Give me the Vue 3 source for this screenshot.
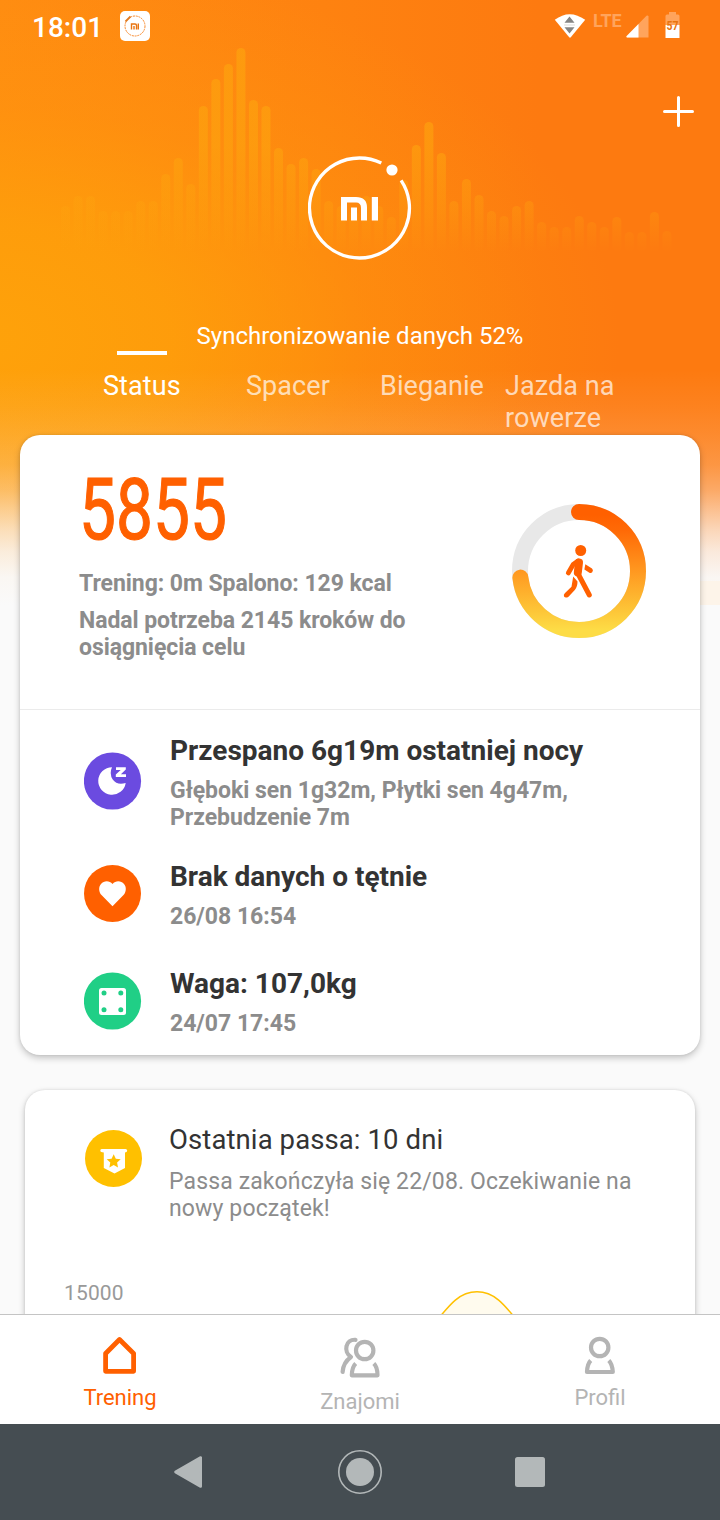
<template>
  <div class="phone">
    <main class="content">
      <div class="hero-bg">
        <svg class="wave" width="720" height="270" viewBox="0 0 720 270">
          <defs>
            <linearGradient id="barFade" gradientUnits="userSpaceOnUse" x1="0" y1="40" x2="0" y2="252">
              <stop offset="0" stop-color="#fda40e" stop-opacity="0.65" />
              <stop offset="0.5" stop-color="#fda40e" stop-opacity="0.6" />
              <stop offset="0.8" stop-color="#fda40e" stop-opacity="0.3" />
              <stop offset="1" stop-color="#fda40e" stop-opacity="0" />
            </linearGradient>
          </defs>
          <rect
            v-for="(top, i) in bars"
            :key="i"
            :x="61 + i * 12.53"
            :y="top"
            width="9"
            :height="252 - top"
            rx="4.5"
            fill="url(#barFade)"
          />
        </svg>
      </div>

      <header class="header">
        <div class="status-bar">
          <span class="clock">18:01</span>
          <svg class="app-badge" width="30" height="30" viewBox="0 0 30 30">
            <rect width="30" height="30" rx="5" fill="#fff" />
            <circle cx="15" cy="15" r="10" fill="none" stroke="#f98a2c" stroke-width="1" stroke-dasharray="2 0.8" />
            <path d="M5.500 10.500l5-5" stroke="#e07a20" stroke-width="1.800" />
            <path d="M11.500 18.500v-5.500h3.600q1.400 0 1.400 1.400V18.500M14 15V18.500M18.300 12.400V18.500" fill="none" stroke="#e87410" stroke-width="1.400" />
          </svg>
          <div class="status-icons">
            <svg class="wifi" width="32" height="26" viewBox="0 0 32 26">
              <path d="M.8 6.8Q15.500-4.500 31.200 6.800L16.800 24.200q-.8.900-1.600 0z" fill="#fff" />
              <path d="M15.500 3.500L20.500 9.700H10.500zM15.500 20.400L20.500 14.300H10.500z" fill="#858585" />
              <path d="M10 12h11" stroke="#ddd" stroke-width="1" />
            </svg>
            <span class="lte">LTE</span>
            <svg class="signal" width="23" height="23" viewBox="0 0 23 23">
              <path d="M22.500 1.500V22.500H1.200q-1.400-.4-.5-1.600L20.500.800q1.500-1 2 .7z" fill="#ffa45c" />
              <path d="M12.500 9V22.500H1.200q-1.400-.4-.5-1.600z" fill="#fff" />
            </svg>
            <svg class="battery" width="15" height="27" viewBox="0 0 15 27">
              <path d="M4 0h7v2.500h2q1.500 0 1.500 1.500V13H.5V4Q.5 2.500 2 2.500h2z" fill="#ffa45c" />
              <path d="M.5 13h14v13H.5z" fill="#fff" />
              <text x="7.600" y="18" text-anchor="middle" textLength="12" lengthAdjust="spacingAndGlyphs">57</text>
            </svg>
          </div>
        </div>

        <div class="toolbar">
          <svg width="32" height="32" viewBox="0 0 32 32">
            <path d="M16.500 1.500V29.500M2.500 15.500H30.500" stroke="#fff" stroke-width="3" stroke-linecap="round" />
          </svg>
        </div>

        <svg class="logo" width="104" height="104" viewBox="0 0 104 104">
          <path d="M73.300 7A50 50 0 1 0 93.100 24.300" fill="none" stroke="#fff" stroke-width="3.300" />
          <circle cx="84" cy="14" r="5.600" fill="#fff" />
          <path d="M33 41H48Q59 41 59 51.500V64.500H53V52Q53 46.500 48 46.500H39V64.500H33z" fill="#fff" />
          <path d="M43 51.500h6v13h-6zM63.800 41H70V64.500H63.800z" fill="#fff" />
        </svg>

        <p class="sync">Synchronizowanie danych 52%</p>

        <nav class="tabs">
          <span
            v-for="tab in tabs"
            :key="tab.name"
            class="tab"
            :class="[tab.cls, { active: tab.active }]"
          >{{ tab.name }}</span>
        </nav>
      </header>

      <section class="card main-card">
        <div class="summary">
          <div class="summary-text">
            <div class="steps"><span>5855</span></div>
            <p class="line first">Trening: 0m Spalono: 129 kcal</p>
            <p class="line">Nadal potrzeba 2145 kroków do osiągnięcia celu</p>
          </div>
          <svg class="ring" width="134" height="134" viewBox="0 0 134 134">
            <defs>
              <!-- runs along x because the stroke it fills is rotated by -90deg -->
              <linearGradient id="ringFill" gradientUnits="userSpaceOnUse" x1="134" y1="0" x2="0" y2="0">
                <stop offset="0.08" stop-color="#ff6000" />
                <stop offset="0.2" stop-color="#ff6a06" />
                <stop offset="0.5" stop-color="#ff9820" />
                <stop offset="0.8" stop-color="#fdc638" />
                <stop offset="0.94" stop-color="#fddc46" />
              </linearGradient>
            </defs>
            <circle cx="67" cy="67" r="59" fill="none" stroke="#e8e8e8" stroke-width="16" />
            <circle
              cx="67"
              cy="67"
              r="59"
              fill="none"
              stroke="url(#ringFill)"
              stroke-width="16"
              stroke-linecap="round"
              pathLength="100"
              :stroke-dasharray="`${progress} 100`"
              class="ring-value"
            />
            <g fill="none" stroke="#ff6000" stroke-linecap="round" stroke-linejoin="round">
              <circle cx="68.700" cy="46.500" r="5.500" fill="#ff6000" stroke="none" />
              <path d="M66 57L61.200 60.500L56.300 69" stroke-width="4.800" />
              <path d="M67 58.500L65.800 68.500" stroke-width="8" />
              <path d="M66.200 70L77.300 91" stroke-width="5" />
              <path d="M61.200 72.500L65.500 77.500Q65.500 83 62.800 86L56.500 92.700Q53.500 94.500 52 92.500Q51.200 90.800 53 89L59.500 82.800z" fill="#ff6000" stroke="none" />
              <path d="M73.300 60.300L80 64.500Q81.800 66.300 80.200 68.300Q79 69.600 77 68.500L72.400 65.500z" fill="#ff6000" stroke="none" />
            </g>
          </svg>
        </div>

        <div class="row">
          <svg class="row-icon" width="58" height="58" viewBox="0 0 58 58">
            <circle cx="28.500" cy="29" r="28.600" fill="#6b4be0" />
            <path d="M28 15.200A13.800 13.800 0 1 0 41.700 31Q33 33.500 28.700 27.500Q25 21.500 28 15.200z" fill="#fff" />
            <path d="M32 15.200H41.800V17.600L36.900 22.300H42V25H31.800V22.600L36.700 17.900H32z" fill="#fff" />
          </svg>
          <div class="row-text">
            <h2>Przespano 6g19m ostatniej nocy</h2>
            <p>Głęboki sen 1g32m, Płytki sen 4g47m, Przebudzenie 7m</p>
          </div>
        </div>

        <div class="row">
          <svg class="row-icon" width="58" height="58" viewBox="0 0 58 58">
            <circle cx="28.500" cy="28.500" r="28.500" fill="#ff6000" />
            <path d="M28.500 41.200L17.500 30C14.700 27 14.300 22 17 18.900C20 15.500 25.500 15.500 28.500 18.900C31.500 15.500 37 15.500 40 18.900C42.700 22 42.300 27 39.500 30z" fill="#fff" />
          </svg>
          <div class="row-text">
            <h2>Brak danych o tętnie</h2>
            <p>26/08 16:54</p>
          </div>
        </div>

        <div class="row last">
          <svg class="row-icon" width="58" height="58" viewBox="0 0 58 58">
            <circle cx="28.500" cy="29" r="28.600" fill="#20cf86" />
            <rect x="15" y="16" width="27" height="27" rx="2.500" fill="#fff" />
            <g fill="#20cf86">
              <circle cx="20" cy="21" r="2.500" />
              <circle cx="36.800" cy="21" r="2.500" />
              <circle cx="20" cy="37.800" r="2.500" />
              <circle cx="36.800" cy="37.800" r="2.500" />
            </g>
          </svg>
          <div class="row-text">
            <h2>Waga: 107,0kg</h2>
            <p>24/07 17:45</p>
          </div>
        </div>
      </section>

      <section class="card streak-card">
        <div class="streak">
          <svg class="streak-icon" width="58" height="58" viewBox="0 0 58 58">
            <circle cx="28.500" cy="29.500" r="28.500" fill="#ffc000" />
            <path d="M16.700 20H40.500Q42.200 20.200 42.200 21.800Q42 23.500 40 23.500V39L29.500 44.500L18.800 39V23.500Q15.500 23.500 15.300 21.800Q15.200 20.200 16.700 20z" fill="#fff" />
            <path d="M28.700 25.300L30.800 29.700L35.700 30.300L32.100 33.600L33 38.500L28.700 36.100L24.400 38.500L25.300 33.600L21.700 30.300L26.600 29.700z" fill="#ffc000" />
          </svg>
          <div class="streak-text">
            <h2>Ostatnia passa: 10 dni</h2>
            <p>Passa zakończyła się 22/08. Oczekiwanie na nowy początek!</p>
          </div>
        </div>
        <div class="chart">
          <span class="axis">15000</span>
          <svg class="curve" width="124" height="60" viewBox="0 0 124 60">
            <path d="M0 60L10 44C30 21 40 .8 62 .8S94 21 114 44L124 60z" fill="#fffbee" stroke="#ffc000" stroke-width="1.500" />
          </svg>
        </div>
      </section>
    </main>

    <nav class="bottom-nav">
      <div class="nav-item selected">
        <svg width="44" height="44" viewBox="0 0 44 44">
          <path d="M21.500 5.500L35.600 19.500V37.300H7.600V19.500z" fill="none" stroke="#ff6000" stroke-width="4.800" stroke-linejoin="round" />
        </svg>
        <span>Trening</span>
      </div>
      <div class="nav-item friends">
        <svg width="44" height="48" viewBox="0 0 44 48">
          <g fill="none" stroke="#b4b4b4" stroke-width="4.200">
            <circle cx="26.700" cy="16.500" r="8.700" />
            <path d="M17.700 29.500Q14 33 13.800 41.300H39.500Q39.500 33 35.800 29.500" stroke-linejoin="round" />
            <path d="M17.500 5.800C7.500 5 5 18 13 23C8 26.500 5 31.500 4.600 38" stroke-linecap="round" stroke-linejoin="round" />
          </g>
        </svg>
        <span>Znajomi</span>
      </div>
      <div class="nav-item">
        <svg width="44" height="44" viewBox="0 0 44 44">
          <g fill="none" stroke="#b4b4b4" stroke-width="4.200">
            <circle cx="21.700" cy="13.500" r="8.700" />
            <path d="M12.700 26.500Q9.300 30 9 38H34.800Q34.300 30 30.800 26.500" stroke-linejoin="round" />
          </g>
        </svg>
        <span>Profil</span>
      </div>
    </nav>

    <footer class="system-nav">
      <svg class="sys back" width="44" height="44" viewBox="0 0 44 44">
        <path d="M32.700 7.500V36.500L7.500 22z" fill="#b3b8b9" stroke="#b3b8b9" stroke-width="2.600" stroke-linejoin="round" />
      </svg>
      <svg class="sys" width="44" height="44" viewBox="0 0 44 44">
        <circle cx="22" cy="22" r="21.200" fill="none" stroke="#b3b8b9" stroke-width="1.600" />
        <circle cx="22" cy="22" r="14" fill="#b3b8b9" />
      </svg>
      <svg class="sys recent" width="44" height="44" viewBox="0 0 44 44">
        <rect x="7" y="7" width="30" height="30" rx="2.500" fill="#b3b8b9" />
      </svg>
    </footer>
  </div>
</template>

<script setup>
import { computed } from 'vue'

const steps = 5855
const goal = 8000
const progress = computed(() => (steps / goal) * 100)

const tabs = [
  { name: 'Status', cls: 'tab-status', active: true },
  { name: 'Spacer', cls: 'tab-walk', active: false },
  { name: 'Bieganie', cls: 'tab-run', active: false },
  { name: 'Jazda na rowerze', cls: 'tab-bike', active: false },
]

// y of the top of each bar in the header
const bars = [
  206, 196, 196, 211, 211, 211, 201, 201, 174, 158, 184, 106, 79, 64, 48, 100,
  106, 148, 164, 158, 169, 201, 206, 211, 196, 206, 217, 180, 145, 122, 153,
  201, 179, 195, 211, 216, 206, 201, 222, 227, 227, 216, 222, 227, 217, 232,
  232, 212, 231,
]
</script>

<style>
body {
  margin: 0;
}
</style>

<style scoped>
.phone {
  width: 720px;
  height: 1520px;
  display: flex;
  flex-direction: column;
  overflow: hidden;
  background: #fafafa;
  font-family: Roboto, "Noto Sans", sans-serif;
}

p, h2 {
  margin: 0;
}

svg {
  display: block;
  flex: none;
}

.content {
  flex: 1;
  min-height: 0;
  overflow: hidden;
  position: relative;
}

.hero-bg {
  position: absolute;
  top: 0;
  left: 0;
  width: 720px;
  height: 605px;
  background:
    linear-gradient(#fdf4e9, #fdf4e9) 700px 581px / 20px 24px no-repeat,
    linear-gradient(180deg, rgba(250, 250, 250, 0) 370px, rgba(250, 250, 250, 0.06) 405px, rgba(250, 250, 250, 0.13) 435px, rgba(250, 250, 250, 0.22) 465px, rgba(250, 250, 250, 0.37) 490px, rgba(250, 250, 250, 0.55) 510px, rgba(250, 250, 250, 0.72) 530px, rgba(250, 250, 250, 0.87) 552px, rgba(250, 250, 250, 0.97) 577px, #fafafa 605px),
    radial-gradient(ellipse 640px 390px at -20px 340px, #fea20a 0%, rgba(254, 160, 10, 0.85) 30%, rgba(254, 152, 12, 0.45) 60%, rgba(254, 140, 14, 0) 100%),
    linear-gradient(90deg, #ff8b12 0%, #fe8210 45%, #fd7a10 75%, #fd7a10 100%);
}

.header {
  position: relative;
  height: 435px;
  color: #fff;
}

.status-bar {
  height: 54px;
  padding: 0 40px 0 32px;
  display: flex;
  align-items: center;
}

.clock {
  width: 88px;
  padding-top: 2px;
  font-size: 28px;
  font-weight: 500;
  line-height: 52px;
}

.app-badge {
  margin-bottom: 2px;
}

.status-icons {
  margin-left: auto;
  display: flex;
  height: 30px;
}

.wifi {
  margin: 1px 7px 0 0;
}

.lte {
  width: 33px;
  font-size: 18px;
  font-weight: 700;
  line-height: 18px;
  letter-spacing: -0.2px;
  color: #ffa45c;
}

.signal {
  margin-top: 3px;
}

.battery {
  margin: 0 0 0 16px;
}

.battery text {
  font-family: Roboto, sans-serif;
  font-size: 12px;
  font-weight: 700;
  fill: #e87410;
}

.toolbar {
  display: flex;
  justify-content: flex-end;
  padding: 42px 26px 0 0;
}

.logo {
  margin: 28px auto 0;
}

.sync {
  margin-top: 62px;
  text-align: center;
  font-size: 24px;
  line-height: 28px;
}

.tabs {
  display: flex;
  align-items: flex-start;
  padding-left: 103px;
}

.tab {
  padding-top: 20px;
  font-size: 27px;
  line-height: 32px;
  letter-spacing: 0.08px;
  color: rgba(255, 255, 255, 0.7);
}

.tab-status {
  width: 143px;
}

.tab-walk {
  width: 134px;
}

.tab-run {
  width: 125px;
}

.tab-bike {
  width: 125px;
}

.tab.active {
  color: #fff;
}

.tab.active::before {
  content: "";
  display: block;
  width: 50px;
  height: 4px;
  margin: -19px 0 15px 14px;
  background: #fff;
}

.card {
  position: relative;
  background: #fff;
  border-radius: 20px;
  box-shadow: 0 3px 7px rgba(0, 0, 0, 0.22), 0 0 3px rgba(0, 0, 0, 0.1);
}

.main-card {
  box-sizing: border-box;
  height: 620px;
  margin: 0 20px;
}

.summary {
  display: flex;
  justify-content: space-between;
  box-sizing: border-box;
  height: 275px;
  padding: 0 54px 0 59px;
  border-bottom: 1px solid #ebebeb;
}

.steps {
  height: 95px;
  padding-top: 23px;
  font-size: 86px;
  line-height: 104px;
  color: #ff6000;
}

.steps span {
  display: inline-block;
  font-weight: 400;
  -webkit-text-stroke: 1.2px #ff6000;
  transform: scaleX(0.765);
  transform-origin: left center;
}

.line {
  width: 360px;
  font-size: 23px;
  font-weight: 700;
  line-height: 27px;
  letter-spacing: -0.06px;
  color: #8c8c8c;
}

.line.first {
  margin: 17px 0 10px;
}

.ring {
  margin-top: 69px;
}

.ring-value {
  transform: rotate(-90deg);
  transform-origin: 67px 67px;
}

.row {
  display: flex;
  align-items: center;
  gap: 28px;
  padding: 25px 59px 0 64px;
}

.row + .row {
  padding-top: 30px;
}

.row + .row.last {
  padding-top: 38px;
}

.row-icon {
  margin-top: -4px;
}

.row-text h2 {
  font-size: 28px;
  font-weight: 700;
  line-height: 32px;
  color: #333;
}

.row-text p {
  margin-top: 10px;
  font-size: 23px;
  font-weight: 700;
  line-height: 27px;
  letter-spacing: -0.02px;
  color: #8c8c8c;
}

.streak-card {
  height: 400px;
  margin: 35px 25px 0;
}

.streak {
  display: flex;
  gap: 26px;
  padding: 34px 50px 0 60px;
}

.streak-icon {
  margin-top: 5px;
}

.streak-text h2 {
  font-size: 27.500px;
  font-weight: 400;
  line-height: 32px;
  letter-spacing: 0.1px;
  color: #333;
}

.streak-text p {
  width: 480px;
  margin-top: 12px;
  font-size: 23px;
  line-height: 27px;
  letter-spacing: 0.13px;
  color: #8c8c8c;
}

.chart {
  display: flex;
  padding: 59px 0 0 39px;
}

.axis {
  width: 351px;
  font-size: 21px;
  line-height: 24px;
  letter-spacing: 0.15px;
  color: #999;
}

.curve {
  margin-top: 10px;
}

.bottom-nav {
  position: relative;
  box-sizing: border-box;
  height: 110px;
  display: flex;
  background: #fff;
  border-top: 1px solid #c4c4c4;
}

.nav-item {
  flex: 1;
  display: flex;
  flex-direction: column;
  align-items: center;
  padding-top: 19px;
  font-size: 22px;
  line-height: 26px;
  color: #b4b4b4;
}

.nav-item span {
  margin-top: 7px;
}

.nav-item.selected {
  color: #ff6000;
}

.system-nav {
  height: 96px;
  display: flex;
  align-items: center;
  justify-content: center;
  gap: 126px;
  background: #454d52;
}
</style>
